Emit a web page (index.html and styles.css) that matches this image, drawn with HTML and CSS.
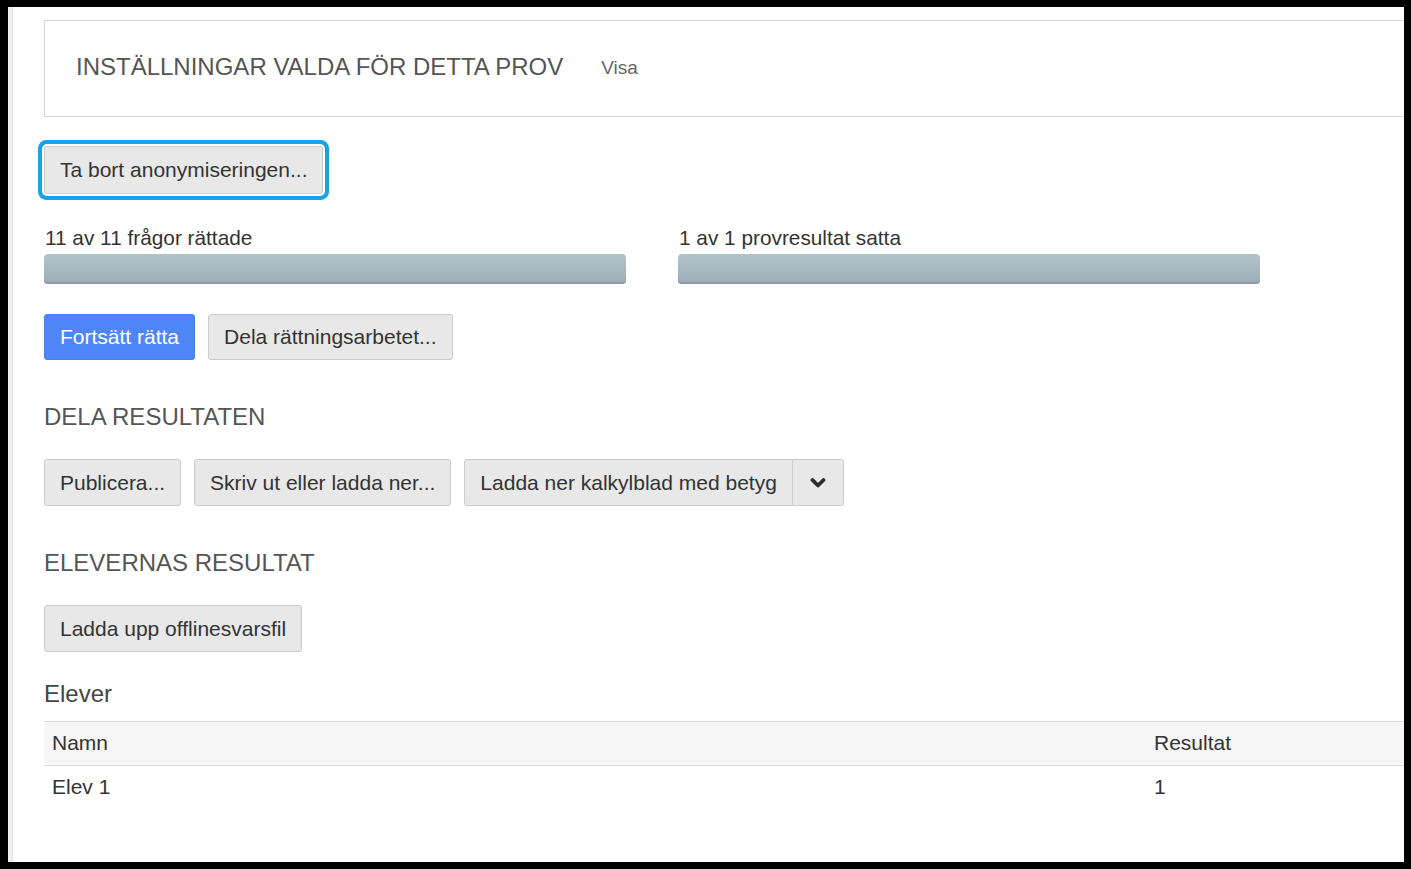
FILE: index.html
```html
<!DOCTYPE html>
<html lang="sv">
<head>
    <meta charset="UTF-8">
    <meta name="viewport" content="width=device-width, initial-scale=1.0">
    <title>Prov - Resultat</title>
    <link rel="stylesheet" href="styles.css">
</head>
<body>
    <div class="frame">
        <div class="page">
            <div class="content">
                <div class="settings-box">
                    <h2 class="settings-title">Inställningar valda för detta prov</h2>
                    <a class="settings-link" href="#">Visa</a>
                </div>

                <div class="anon-row">
                    <button class="btn btn-focused">Ta bort anonymiseringen...</button>
                </div>

                <div class="progress-row">
                    <div class="progress-item">
                        <div class="progress-label">11 av 11 frågor rättade</div>
                        <div class="progress-bar"></div>
                    </div>
                    <div class="progress-item">
                        <div class="progress-label">1 av 1 provresultat satta</div>
                        <div class="progress-bar"></div>
                    </div>
                </div>

                <div class="button-row grading-row">
                    <button class="btn btn-primary">Fortsätt rätta</button>
                    <button class="btn">Dela rättningsarbetet...</button>
                </div>

                <h3 class="section-title">Dela resultaten</h3>
                <div class="button-row">
                    <button class="btn">Publicera...</button>
                    <button class="btn">Skriv ut eller ladda ner...</button>
                    <div class="btn-group">
                        <button class="btn btn-split-main">Ladda ner kalkylblad med betyg</button>
                        <button class="btn btn-split-toggle">
                            <svg width="16" height="12" viewBox="0 0 16 12">
                                <polyline points="2.5,3 8,8.5 13.5,3" fill="none" stroke="#2b2b2b" stroke-width="3.8" stroke-linecap="round" stroke-linejoin="round"/>
                            </svg>
                        </button>
                    </div>
                </div>

                <h3 class="section-title">Elevernas resultat</h3>
                <div class="button-row">
                    <button class="btn">Ladda upp offlinesvarsfil</button>
                </div>

                <h4 class="table-title">Elever</h4>
                <table class="students">
                    <thead>
                        <tr>
                            <th class="col-name">Namn</th>
                            <th class="col-result">Resultat</th>
                        </tr>
                    </thead>
                    <tbody>
                        <tr>
                            <td>Elev 1</td>
                            <td>1</td>
                        </tr>
                    </tbody>
                </table>
            </div>
        </div>
    </div>
</body>
</html>
```

FILE: styles.css
```css
html, body {
    margin: 0;
    padding: 0;
    height: 100%;
    background-color: #000;
}
body {
    font-family: "Liberation Sans", Arial, sans-serif;
    color: #333;
}
.frame {
    box-sizing: border-box;
    height: 100%;
    padding: 7px 7px 7px 8px;
}
.page {
    height: 100%;
    display: flex;
    background-color: #fff;
    border-left: 4px solid #f1f1f1;
    overflow: hidden;
}
.content {
    flex: 1;
    min-width: 0;
    border-left: 1px solid #e2e2e2;
    padding-left: 31px;
    overflow: hidden;
}
.settings-box {
    box-sizing: border-box;
    height: 97px;
    margin-top: 13px;
    margin-right: -20px;
    border: 1px solid #d6d6d6;
    display: flex;
    align-items: center;
    padding-left: 31px;
    padding-bottom: 3px;
}
.settings-title {
    margin: 0;
    font-size: 24px;
    font-weight: normal;
    text-transform: uppercase;
    color: #555;
}
.settings-link {
    margin-left: 38px;
    font-size: 19px;
    color: #666;
    text-decoration: none;
    padding-top: 2px;
}
.btn {
    box-sizing: border-box;
    height: 47px;
    padding: 0 15px;
    font-family: inherit;
    font-size: 21px;
    color: #333;
    background-color: #e8e8e8;
    border: 1px solid #cbcbcb;
    border-radius: 3px;
    white-space: nowrap;
    cursor: pointer;
}
.anon-row {
    margin-top: 29px;
    display: flex;
}
.btn-focused {
    height: 48px;
    width: 279px;
    box-shadow: 0 0 0 2px #fff, 0 0 0 6px #1aa2e6;
    border-radius: 3px;
}
.progress-row {
    display: flex;
    gap: 52px;
    margin-top: 32px;
}
.progress-item {
    width: 582px;
}
.progress-label {
    font-size: 20.8px;
    line-height: 24px;
    color: #333;
    padding-left: 1px;
}
.progress-bar {
    height: 30px;
    margin-top: 4px;
    border-radius: 4px;
    background: linear-gradient(#b3c3cb, #9dadb7);
    box-shadow: inset 0 -2px 0 #8e9ea8;
}
.button-row {
    display: flex;
    gap: 13px;
    margin-top: 27px;
}
.grading-row {
    margin-top: 30px;
}
.grading-row .btn {
    height: 46px;
}
.btn-primary {
    background-color: #4f86f7;
    border-color: #4a7ee8;
    color: #fff;
}
.btn-group {
    display: flex;
}
.btn-split-main {
    border-top-right-radius: 0;
    border-bottom-right-radius: 0;
}
.btn-split-toggle {
    width: 52px;
    margin-left: -1px;
    padding: 0;
    display: flex;
    align-items: center;
    justify-content: center;
    border-top-left-radius: 0;
    border-bottom-left-radius: 0;
}
.section-title {
    margin: 42px 0 0;
    font-size: 24px;
    line-height: 30px;
    font-weight: normal;
    text-transform: uppercase;
    color: #555;
}
.table-title {
    margin: 27px 0 0;
    font-size: 24px;
    line-height: 30px;
    font-weight: normal;
    color: #444;
}
.students {
    width: calc(100% + 20px);
    margin-top: 12px;
    border-collapse: collapse;
    font-size: 21px;
    color: #333;
}
.students th,
.students td {
    height: 41px;
    padding: 0 8px 2px;
    text-align: left;
    font-weight: normal;
}
.students thead tr {
    background-color: #f6f6f6;
    border-top: 1px solid #dedede;
    border-bottom: 1px solid #dedede;
}
.col-result {
    width: 262px;
}
```
